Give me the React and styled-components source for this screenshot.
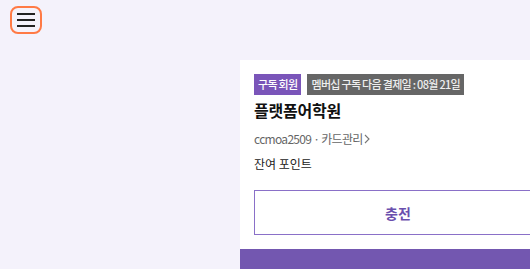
import styled, { createGlobalStyle } from "styled-components";

const GlobalStyle = createGlobalStyle`
  html, body {
    margin: 0;
    padding: 0;
    background: #f4f2fb;
    overflow: hidden;
    font-family: "Noto Sans CJK KR", "Noto Sans", sans-serif;
  }
`;

const Page = styled.div`
  width: 530px;
  height: 269px;
  display: flex;
  flex-direction: column;
`;

const Header = styled.header`
  height: 60px;
  display: flex;
  align-items: flex-start;
  padding: 6px 0 0 10px;
  box-sizing: border-box;
`;

const MenuButton = styled.button`
  width: 32px;
  height: 28px;
  border: 2px solid #ff7a45;
  border-radius: 8px;
  background: transparent;
  padding: 0;
  display: flex;
  flex-direction: column;
  align-items: center;
  justify-content: center;
  gap: 4px;
  cursor: pointer;
`;

const Line = styled.span`
  display: block;
  width: 18px;
  height: 2px;
  background: #222;
`;

const Panel = styled.section`
  margin-left: 240px;
  width: 316px;
  flex: 1;
  background: #fff;
  display: flex;
  flex-direction: column;
`;

const Body = styled.div`
  padding: 14px 14px 0;
`;

const Badges = styled.div`
  display: flex;
  gap: 6px;
`;

const Badge = styled.span`
  height: 21px;
  line-height: 21px;
  padding: 0 4px;
  font-size: 11px;
  font-weight: 500;
  color: ${(p) => (p.$grey ? "#eee" : "#fff")};
  background: ${(p) => (p.$grey ? "#666" : "#7a55b9")};
  letter-spacing: -0.7px;
`;

const Title = styled.h2`
  margin: 3px 0 0;
  font-size: 16px;
  line-height: 24px;
  font-weight: 700;
  color: #111;
  letter-spacing: -0.2px;
`;

const Meta = styled.div`
  margin-top: 9px;
  display: flex;
  align-items: center;
  gap: 1px;
  font-size: 12px;
  line-height: 16px;
  color: #666;
  letter-spacing: -0.7px;
`;

const Points = styled.div`
  margin-top: 8px;
  font-size: 12px;
  line-height: 18px;
  color: #222;
`;

const ChargeButton = styled.button`
  margin-top: 17px;
  width: 100%;
  height: 45px;
  border: 1px solid #8a70c8;
  background: #fff;
  color: #6a4fae;
  font-family: inherit;
  font-size: 14px;
  font-weight: 700;
  cursor: pointer;
`;

const BottomBar = styled.div`
  margin-top: 14px;
  flex: 1;
  background: #7357b0;
`;

function Chevron() {
  return (
    <svg width="6" height="10" viewBox="0 0 6 10" fill="none">
      <path d="M1 1l4 4-4 4" stroke="#777" strokeWidth="1.1" />
    </svg>
  );
}

export default function App() {
  return (
    <Page>
      <GlobalStyle />
      <Header>
        <MenuButton aria-label="menu">
          <Line />
          <Line />
          <Line />
        </MenuButton>
      </Header>
      <Panel>
        <Body>
          <Badges>
            <Badge>구독 회원</Badge>
            <Badge $grey>멤버십 구독 다음 결제일 : 08월 21일</Badge>
          </Badges>
          <Title>플랫폼어학원</Title>
          <Meta>
            ccmoa2509 · 카드관리
            <Chevron />
          </Meta>
          <Points>잔여 포인트</Points>
          <ChargeButton>충전</ChargeButton>
        </Body>
        <BottomBar />
      </Panel>
    </Page>
  );
}
